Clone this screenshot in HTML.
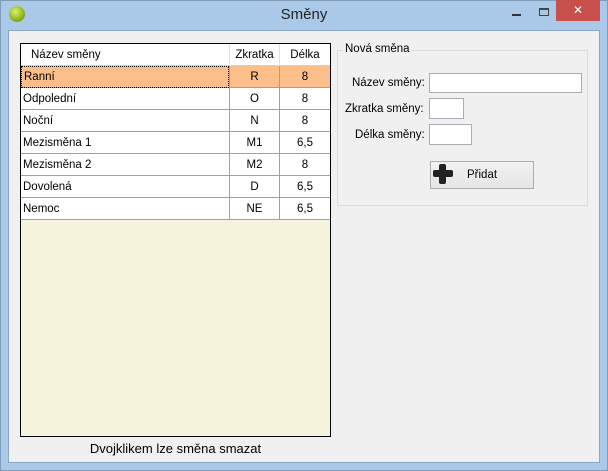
<!DOCTYPE html>
<html><head><meta charset="utf-8"><style>
*{margin:0;padding:0;box-sizing:border-box}
body{width:608px;height:471px;background:#aac9e9;font-family:"Liberation Sans",sans-serif;font-size:11.5px;color:#000;position:relative;overflow:hidden}
.a{position:absolute}
.win{left:0;top:0;width:608px;height:471px;border:1px solid #7f9db9}
.client{left:8px;top:30px;width:592px;height:433px;background:#f0f0f0;border:1px solid #8aa5c2}
.grid{left:20px;top:43px;width:311px;height:394px;border:1px solid #000;background:#f5f3dc}
.row{position:absolute;left:0;width:309px;height:22px;background:#fff;border-bottom:1px solid #a0a0a0}
.c{position:absolute;top:0;height:22px;line-height:23px}
.c1{left:2px;width:206px}
.c2{left:208px;width:50px;text-align:center;border-left:1px solid #a0a0a0}
.c3{left:258px;width:51px;text-align:center;border-left:1px solid #a0a0a0}
.lbl{font-size:11.5px;color:#000}
.inp{background:#fff;border:1px solid #abadb3}
</style></head><body>
<div class="a win"></div>
<div class="a" style="left:9px;top:6px;width:16px;height:16px;border-radius:50%;background:radial-gradient(circle at 40% 35%,#d8f06a,#8fb21c 60%,#5a7a10)"></div>
<div class="a" style="left:0;width:608px;top:6px;text-align:center;font-size:15px;color:#222">Směny</div>
<div class="a" style="left:512px;top:14px;width:9px;height:2px;background:#333"></div>
<div class="a" style="left:539px;top:8px;width:10px;height:8px;border:1px solid #444;border-top-width:2px"></div>
<div class="a" style="left:556px;top:0;width:44px;height:21px;background:#c7504c;color:#fff;text-align:center;font-size:12px;line-height:21px">✕</div>
<div class="a client"></div>
<div class="a grid">
 <div class="row" style="top:0;height:22px;border-bottom:1px solid #d0d0d0"><div class="c c1" style="left:10px">Název směny</div><div class="c c2" style="border-left:1px solid #e0e0e0">Zkratka</div><div class="c c3" style="border-left:1px solid #e0e0e0">Délka</div></div>
 <div class="row" style="top:22px;background:#fdbf8a"><div class="c c1" style="left:0;width:208px;padding-left:2px;border:1px dotted #000;line-height:21px">Ranní</div><div class="c c2">R</div><div class="c c3">8</div></div>
 <div class="row" style="top:44px"><div class="c c1">Odpolední</div><div class="c c2">O</div><div class="c c3">8</div></div>
 <div class="row" style="top:66px"><div class="c c1">Noční</div><div class="c c2">N</div><div class="c c3">8</div></div>
 <div class="row" style="top:88px"><div class="c c1">Mezisměna 1</div><div class="c c2">M1</div><div class="c c3">6,5</div></div>
 <div class="row" style="top:110px"><div class="c c1">Mezisměna 2</div><div class="c c2">M2</div><div class="c c3">8</div></div>
 <div class="row" style="top:132px"><div class="c c1">Dovolená</div><div class="c c2">D</div><div class="c c3">6,5</div></div>
 <div class="row" style="top:154px"><div class="c c1">Nemoc</div><div class="c c2">NE</div><div class="c c3">6,5</div></div>
</div>
<div class="a" style="left:20px;width:311px;top:441px;text-align:center;font-size:13px">Dvojklikem lze směna smazat</div>
<div class="a" style="left:337px;top:50px;width:251px;height:156px;border:1px solid #dcdcdc"></div>
<div class="a" style="left:343px;top:43px;background:#f0f0f0;padding:0 2px">Nová směna</div>
<div class="a lbl" style="left:352px;top:77px">Název směny:</div>
<div class="a inp" style="left:429px;top:73px;width:153px;height:20px"></div>
<div class="a lbl" style="left:345px;top:103px">Zkratka směny:</div>
<div class="a inp" style="left:429px;top:98px;width:35px;height:21px"></div>
<div class="a lbl" style="left:355px;top:129px">Délka směny:</div>
<div class="a inp" style="left:429px;top:124px;width:43px;height:21px"></div>
<div class="a" style="left:430px;top:161px;width:104px;height:28px;border:1px solid #adadad;background:linear-gradient(#f2f2f2,#e5e5e5)"></div>
<div class="a" style="left:433px;top:170px;width:20px;height:7px;background:#222;border-radius:2px"></div>
<div class="a" style="left:439px;top:164px;width:7px;height:20px;background:#222;border-radius:2px"></div>
<div class="a" style="left:467px;top:169px">Přidat</div>
</body></html>
